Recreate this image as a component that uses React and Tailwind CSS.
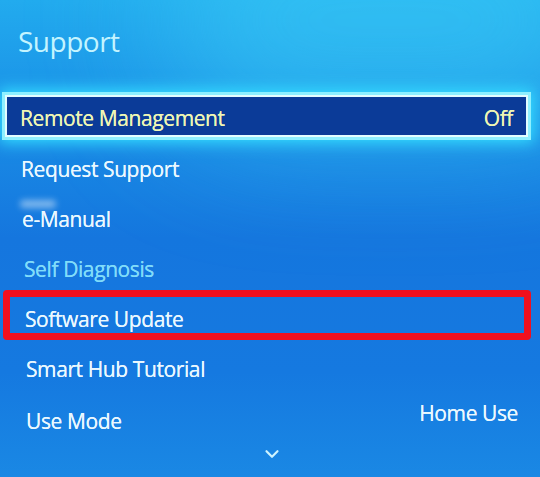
import React from 'react';
import { ChevronDown } from 'lucide-react';

const rows = [
  { label: 'Request Support', pl: 'pl-[21px]' },
  { label: 'e-Manual', pl: 'pl-[22px]', smudge: true },
  { label: 'Self Diagnosis', pl: 'pl-[24px]', dim: true },
];

const item = 'text-[21px] tracking-[-0.4px] [text-shadow:0_0_0.6px_currentColor]';

export default function App() {
  return (
    <div
      className="relative w-[540px] h-[477px] overflow-hidden bg-[linear-gradient(180deg,#22abee_0%,#1a8ee6_25%,#1576de_50%,#1579e0_78%,#1a88e4_100%)] text-[#eaf8ff]"
      style={{ fontFamily: '"Open Sans", "Noto Sans", sans-serif' }}
    >
      {/* soft lighter wash at the top right */}
      <div className="pointer-events-none absolute -top-[90px] right-[-80px] w-[460px] h-[220px] rounded-full bg-[#40d4f8]/50 blur-3xl" />

      <div className="relative flex flex-col">
        {/* Title */}
        <div className="h-[95px] pl-[18px] pt-[24px]">
          <h1 className="text-[28px] leading-[34px] text-[#c4f4ff] tracking-[-0.5px]">Support</h1>
        </div>

        {/* Focused row */}
        <div className="h-[50px] pt-[2px] pl-[7px] pr-[14px]">
          <div className="h-[38px] flex items-center justify-between pt-[5px] pl-[13px] pr-[13px] bg-[#0b3b98] shadow-[0_0_0_2px_#e2fdff,0_0_0_5px_#8ef0ff,0_0_14px_8px_#34dcff]">
            <span className={`${item} text-[#eef6b4]`}>Remote Management</span>
            <span className={`${item} text-[#eef6b4]`}>Off</span>
          </div>
        </div>

        {rows.map((r) => (
          <div key={r.label} className={`relative h-[50px] flex items-center ${r.pl}`}>
            {r.smudge && (
              <span className="absolute left-[20px] top-[5px] w-[36px] h-[8px] rounded-full bg-white/45 blur-[3px]" />
            )}
            <span className={`${item} ${r.dim ? 'text-[#80dcfa]' : 'text-[#eaf8ff]'}`}>{r.label}</span>
          </div>
        ))}

        {/* Software Update with red annotation box */}
        <div className="relative h-[50px] flex items-center pl-[25px]">
          <span className={item}>Software Update</span>
          <div className="absolute left-[3px] right-[9px] -top-[5px] h-[50px] rounded-[4px] border-[7px] border-[#f0101e]" />
        </div>

        <div className="h-[50px] flex items-center pl-[26px]">
          <span className={item}>Smart Hub Tutorial</span>
        </div>

        <div className="h-[50px] flex items-center justify-between pl-[26px] pr-[22px]">
          <span className={`${item} pt-[4px]`}>Use Mode</span>
          <span className={`${item} -mt-[12px]`}>Home Use</span>
        </div>

        <div className="flex justify-center pl-[4px] -mt-[2px]">
          <ChevronDown className="w-[26px] h-[22px] text-[#cdf3ff]" strokeWidth={2.4} />
        </div>
      </div>
    </div>
  );
}
